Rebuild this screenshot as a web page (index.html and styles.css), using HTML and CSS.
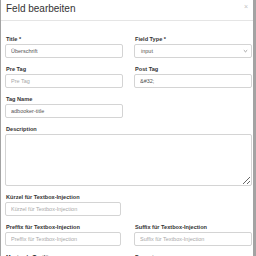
FILE: index.html
```html
<!DOCTYPE html>
<html lang="de">
<head>
    <meta charset="UTF-8">
    <title>Feld bearbeiten</title>
    <link rel="stylesheet" href="styles.css">
</head>
<body>
    <div class="modal">
        <!-- Header -->
        <div class="modal-header">
            <h4>Feld bearbeiten</h4>
            <span class="close">&times;</span>
        </div>

        <!-- Body -->
        <div class="modal-body">
            <div class="row">
                <div class="field">
                    <label>Title *</label>
                    <input type="text" value="Überschrift">
                </div>
                <div class="field">
                    <label>Field Type *</label>
                    <div class="select">
                        <span>input</span>
                        <svg width="5" height="4" viewBox="0 0 5 4"><path d="M0.8 1.2 L2.5 2.8 L4.2 1.2" fill="none" stroke="#777" stroke-width="0.7"/></svg>
                    </div>
                </div>
            </div>

            <div class="row">
                <div class="field">
                    <label>Pre Tag</label>
                    <input type="text" placeholder="Pre Tag">
                </div>
                <div class="field">
                    <label>Post Tag</label>
                    <input type="text" value="&amp;#32;">
                </div>
            </div>

            <div class="row">
                <div class="field">
                    <label>Tag Name</label>
                    <input type="text" value="adbooker-title">
                </div>
            </div>

            <div class="field">
                <label>Description</label>
                <textarea></textarea>
            </div>

            <div class="row">
                <div class="field narrow">
                    <label>Kürzel für Textbox-Injection</label>
                    <input type="text" placeholder="Kürzel für Textbox-Injection">
                </div>
            </div>

            <div class="row">
                <div class="field narrow">
                    <label>Preffix für Textbox-Injection</label>
                    <input type="text" placeholder="Preffix für Textbox-Injection">
                </div>
                <div class="field">
                    <label>Suffix für Textbox-Injection</label>
                    <input type="text" placeholder="Suffix für Textbox-Injection">
                </div>
            </div>

            <div class="row">
                <div class="field">
                    <label>Maximale Textlänge</label>
                </div>
                <div class="field">
                    <label>Format</label>
                </div>
            </div>
        </div>
    </div>
</body>
</html>
```

FILE: styles.css
```css
/* Global */
body {
    margin: 0;
    background: #a3a3a3;
    font-family: 'Liberation Sans', Arial, sans-serif;
    color: #333;
    height: 256px;
    overflow: hidden;
}

.modal {
    margin-left: 1px;
    width: 252px;
    height: 256px;
    background: #fff;
    overflow: hidden;
}

/* Header */
.modal-header {
    height: 20px;
    border-bottom: 1px solid #e5e5e5;
    display: flex;
    justify-content: space-between;
    align-items: flex-start;
    padding: 0 5px;
}

.modal-header h4 {
    margin: 3px 0 0;
    font-size: 10px;
    line-height: 12px;
    font-weight: normal;
    color: #333;
}

.close {
    font-size: 7px;
    line-height: 7px;
    margin-top: 3px;
    color: #c2c2c2;
}

/* Body */
.modal-body {
    padding: 15px 1px 0 4px;
}

.row {
    display: grid;
    grid-template-columns: 118px 118px;
    gap: 11px;
}

.field {
    display: flex;
    flex-direction: column;
    margin-bottom: 8px;
}

.field label {
    font-size: 5.6px;
    line-height: 6px;
    font-weight: bold;
    margin: 0 0 2px 1px;
}

.field input,
.select {
    box-sizing: border-box;
    height: 14px;
    border: 1px solid #d4d4d4;
    border-radius: 2px;
    padding: 0 5px;
    font-family: inherit;
    font-size: 5.5px;
    color: #555;
    outline: none;
}

.field input::placeholder {
    color: #a8a8a8;
}

.field.narrow input {
    width: 116px;
}

.select {
    display: flex;
    align-items: center;
    justify-content: space-between;
    padding: 0 3px 0 6px;
}

textarea {
    box-sizing: border-box;
    width: 247px;
    height: 52px;
    border: 1px solid #d4d4d4;
    border-radius: 2px;
    outline: none;
}
```
